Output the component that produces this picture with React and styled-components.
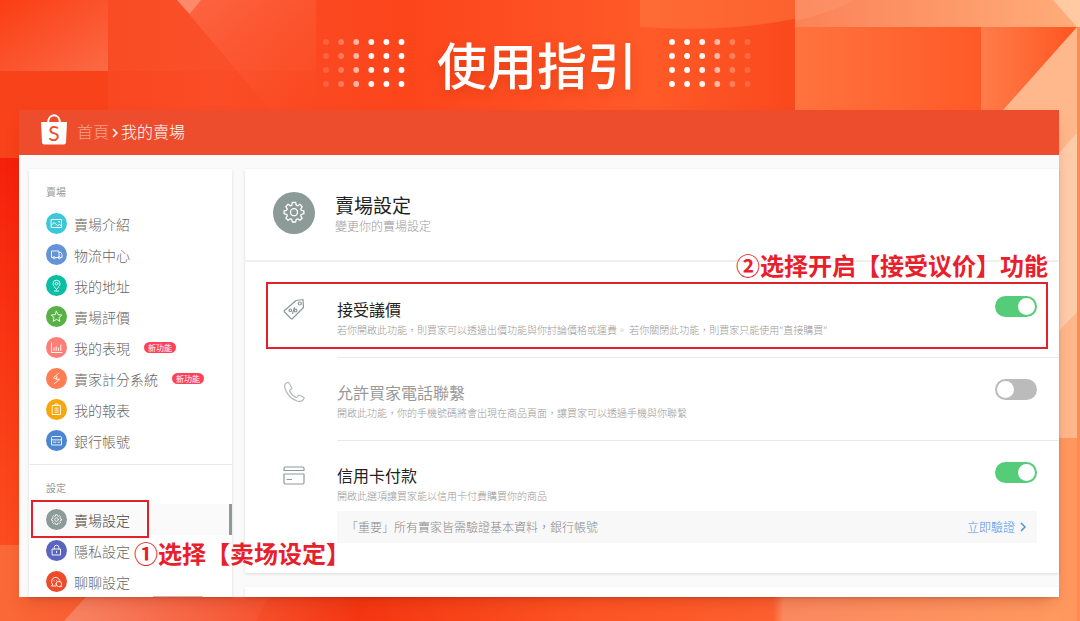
import React from 'react';
import styled, { createGlobalStyle, css } from 'styled-components';

const GlobalStyle = createGlobalStyle`
  * { box-sizing: border-box; }
  body {
    margin: 0;
    font-family: "Noto Sans CJK TC", "Noto Sans", sans-serif;
    font-weight: 300;
    color: #333;
  }
  h1, h2, h3, p, ul { margin: 0; padding: 0; }
  ul { list-style: none; }
  a { color: inherit; text-decoration: none; }
`;

const Page = styled.div`
  position: relative;
  display: flex;
  flex-direction: column;
  min-height: 100vh;
  padding: 0 21px 24px 19px;
  overflow: hidden;
  background: #fb4f22;
`;

const Backdrop = styled.svg`
  position: absolute;
  inset: 0;
  width: 100%;
  height: 100%;
`;

const Hero = styled.header`
  position: relative;
  display: flex;
  align-items: center;
  justify-content: center;
  gap: 32px;
  height: 110px;
  padding: 15px 4px 0 0;
`;

const HeroTitle = styled.h1`
  font-family: "Noto Sans CJK SC", sans-serif;
  font-size: 50px;
  line-height: 60px;
  font-weight: 500;
  color: #fff;
  text-shadow: 0 4px 10px rgba(190, 40, 0, 0.35);
`;

const Window = styled.div`
  position: relative;
  flex: 1;
  display: flex;
  flex-direction: column;
  background: #fafafb;
  box-shadow: 0 8px 16px -6px rgba(150, 30, 0, 0.35);
`;

const TopBar = styled.nav`
  display: flex;
  align-items: center;
  height: 45px;
  padding-left: 21px;
  background: #ee4d2d;
  color: #fff;
  font-size: 16px;
  line-height: 24px;
`;

const Crumb = styled.a`
  margin-left: ${(p) => (p.$home ? '9px' : '3px')};
  margin-right: ${(p) => (p.$home ? '3px' : '0')};
  padding-bottom: 4px;
  color: ${(p) => (p.$home ? '#f8a08c' : '#fff')};
`;

const Logo = styled.svg`
  margin-bottom: 6px;
`;

const Columns = styled.div`
  flex: 1;
  display: flex;
  gap: 13px;
  padding: 14px 0 0 10px;
`;

const card = css`
  background: #fff;
  box-shadow: 0 1px 3px rgba(0, 0, 0, 0.12);
`;

const Sidebar = styled.aside`
  ${card}
  position: relative;
  flex: 0 0 203px;
  &::after {
    content: "";
    position: absolute;
    right: 29px;
    bottom: 0;
    width: 50px;
    height: 1px;
    background: #d9b4b6;
  }
`;

const NavSection = styled.section`
  padding-top: 16px;
  & + & { border-top: 1px solid #e8e8ea; margin-top: 8px; }
`;

const NavHeading = styled.h2`
  padding-left: 17px;
  margin-bottom: 9px;
  font-size: 10px;
  line-height: 14px;
  font-weight: 400;
  color: #999;
`;

const NavItem = styled.li`
  position: relative;
`;

const NavLink = styled.a`
  display: flex;
  align-items: center;
  gap: 7px;
  height: 31px;
  padding-left: 17px;
  font-size: 14px;
  line-height: 20px;
  color: ${(p) => (p.$active ? '#444' : '#666')};
  ${(p) => p.$active && css`
    background: #fafafa;
    border-right: 3px solid #8c9a98;
  `}
`;

const NavIcon = styled.svg`
  flex: none;
  width: 21px;
  height: 21px;
  border-radius: 50%;
  background: ${(p) => p.$color};
  fill: none;
  stroke: #fff;
  stroke-width: 0.9;
  stroke-linejoin: round;
  stroke-linecap: round;
`;

const NewBadge = styled.span`
  margin-left: 7px;
  padding: 0 4px;
  border-radius: 6px;
  background: #ff4257;
  color: #fff;
  font-size: 8px;
  line-height: 11px;
  font-weight: 400;
`;

const Main = styled.main`
  flex: 1;
  min-width: 0;
  display: flex;
  flex-direction: column;
  gap: 14px;
`;

const Card = styled.section`
  ${card}
`;

const NextCard = styled.div`
  ${card}
  flex: 1;
  min-height: 10px;
`;

const CardHeader = styled.div`
  display: flex;
  gap: 20px;
  padding: 23px 28px 26px;
  border-bottom: 2px solid #f0f0f1;
`;

const HeaderIcon = styled.svg`
  flex: none;
  width: 42px;
  height: 42px;
  border-radius: 50%;
  background: #8c9a98;
`;

const CardTitle = styled.h2`
  font-size: 19px;
  line-height: 26px;
  font-weight: 400;
  color: #222;
`;

const CardSubtitle = styled.p`
  font-size: 12px;
  line-height: 16px;
  color: #999;
`;

const Settings = styled.ul`
  padding: 13px 0 10px;
`;

const Setting = styled.li`
  position: relative;
  display: flex;
  gap: 32px;
  padding-left: 38px;
  &:last-child > div { border-bottom: 0; }
`;

const SettingIcon = styled.svg`
  flex: none;
  width: 22px;
  height: 22px;
  margin-top: 23px;
  fill: none;
  stroke: ${(p) => (p.$off ? '#b5babb' : '#8c9a9c')};
  stroke-width: 1.2;
  stroke-linejoin: round;
  stroke-linecap: round;
`;

const SettingBody = styled.div`
  flex: 1;
  min-width: 0;
  padding: 21px 22px 20px 0;
  border-bottom: 1px solid #e9e9ea;
`;

const SettingLine = styled.div`
  display: flex;
  align-items: flex-start;
  justify-content: space-between;
`;

const SettingText = styled.div`
  padding-top: 3px;
`;

const SettingTitle = styled.label`
  display: block;
  font-size: 16px;
  line-height: 20px;
  font-weight: 400;
  color: ${(p) => (p.$off ? '#999' : '#222')};
`;

const SettingDesc = styled.p`
  margin-top: 4px;
  font-size: 10px;
  line-height: 14px;
  color: #999;
`;

const Switch = styled.input`
  appearance: none;
  flex: none;
  display: flex;
  width: 42px;
  height: 21px;
  margin: 0;
  padding: 2px;
  border-radius: 11px;
  background: #bbb;
  cursor: pointer;
  &::before {
    content: "";
    width: 17px;
    height: 17px;
    border-radius: 50%;
    background: #fff;
  }
  &:checked {
    justify-content: flex-end;
    background: #55cc77;
  }
`;

const Notice = styled.div`
  display: flex;
  align-items: center;
  justify-content: space-between;
  height: 32px;
  margin-top: 8px;
  padding: 0 11px 0 9px;
  background: #f8f8f9;
  font-size: 12px;
  line-height: 16px;
  color: #888;
`;

const VerifyLink = styled.a`
  display: flex;
  align-items: center;
  gap: 5px;
  color: #4a90e8;
`;

const Highlight = styled.div`
  position: absolute;
  border: 2px solid #e3202b;
  pointer-events: none;
  ${(p) => p.$wide
    ? 'top: 7px; bottom: 9px; left: 21px; right: 11px;'
    : 'top: -4px; bottom: -3px; left: 2px; width: 118px;'}
`;

const Callout = styled.strong`
  position: absolute;
  font-family: "Noto Sans CJK SC", sans-serif;
  font-size: 24px;
  line-height: 30px;
  font-weight: 700;
  color: #e8202b;
  white-space: nowrap;
  pointer-events: none;
  ${(p) => p.$wide
    ? 'right: 11px; top: -25px;'
    : 'left: 105px; top: 34px;'}
`;

const GEAR = 'M9.3 1.5h3.4l.5 2.6 1.5.7 2.2-1.6 2.3 2.4-1.5 2.2.6 1.5 2.6.5v2.9l-2.6.6-.6 1.5 1.5 2.2-2.3 2.3-2.2-1.5-1.5.6-.5 2.6H9.3l-.5-2.6-1.5-.6-2.2 1.5-2.3-2.3 1.5-2.2-.7-1.5-2.5-.6V9.8l2.5-.5.7-1.5-1.5-2.2 2.3-2.4 2.2 1.6 1.5-.7z';

const navGlyphs = {
  shop: <><rect x="5.5" y="6.5" width="10" height="8" /><path d="M5.5 12l2.5-2.5 3.5 3 2-1 2 1.5" /><circle cx="13" cy="8.8" r=".4" /></>,
  truck: <><path d="M7 13.5H5.5v-6.5h7.5v6.500H9.500M13 8.500h2l1 2v3h-1.500" /><circle cx="8.200" cy="13.700" r="1.100" /><circle cx="13.300" cy="13.700" r="1.100" /></>,
  pin: <><path d="M10.500 14.500C8.500 12 7 10.500 7 8.700a3.500 3.500 0 0 1 7 0c0 1.800-1.500 3.300-3.500 5.800z" /><circle cx="10.500" cy="8.700" r="1.300" /><path d="M8.500 16h4" /></>,
  star: <path d="M10.500 5.200l1.600 3.500 3.700.4-2.800 2.500.8 3.700-3.300-1.900-3.300 1.900.8-3.700-2.800-2.500 3.700-.4z" />,
  chart: <path d="M5.500 6v9.500h10.500M8 13.500v-2.500M10.200 13.500v-4M12.400 13.500v-2.500M14.800 13.500v-5.500" />,
  bolt: <path d="M12.500 5.500l-5 4.200 2.500 1.300M8.500 15.500l5-4.200-3.500-.3 1-2.500" />,
  report: <><rect x="6.500" y="6.500" width="8" height="9" /><path d="M9 6.500v-1.500h3v1.500M9 9.200h3.200M9 11.200h3.200M9 13.200h3.200" /></>,
  bank: <><path d="M5.500 9.500v-2a1 1 0 0 1 1-1h8a1 1 0 0 1 1 1v2zM5.500 9.500v5.500h10v-5.500" /><path d="M7.500 12.200h2.500M12 12.200h1.500" /></>,
  gear: <><g transform="translate(5 5) scale(.5)" strokeWidth="1.600"><path d={GEAR} /><circle cx="11" cy="11" r="3.500" /></g></>,
  lock: <><rect x="6.500" y="9" width="8" height="6" /><path d="M8.200 9v-1.500a2.300 2.300 0 0 1 4.600 0v1.500M10.500 11.300v1.500" /></>,
  chat: <><path d="M6.500 13.500a4.300 4.300 0 1 1 7.500-2.500M6.500 13.500l-1 1.500h4.500" /><path d="M10 13a2.800 2.500 0 1 1 5 1.300l.7 1.200h-3.200A2.600 2.600 0 0 1 10 13zM8 9.800h.1M10.500 9.800h.1" /></>,
};

const settingGlyphs = {
  tag: <><path d="M13 2.500l7-1 .5 8-11 11a1 1 0 0 1-1.500 0l-6.500-6.500a1 1 0 0 1 0-1.500z" /><circle cx="16.800" cy="5.500" r="1.500" /><path d="M11.500 9.500l-2 6" /><circle cx="7.300" cy="12.300" r="1.300" /><circle cx="12.600" cy="12.500" r="1.300" /></>,
  phone: <path d="M4.500 1.500C2 2.500 1 4.500 2 7.500c2 6 6.500 10.500 12 12.500 3 1 5.500.5 7-2.500.2-.5 0-1-.5-1.300l-3.700-2c-.5-.3-1-.2-1.300.2l-1.500 1.800c-.4.4-.8.400-1.300.200-2.500-1.300-4.700-3.500-6-6-.2-.5-.1-1 .3-1.300L8.500 8c.4-.4.5-.8.300-1.300L6 2c-.3-.5-.9-.8-1.500-.5z" />,
  card: <><path d="M1 6.500v-2a1.500 1.500 0 0 1 1.500-1.500h17a1.500 1.500 0 0 1 1.500 1.500v2zM1 10h20v8.500a1.500 1.500 0 0 1-1.500 1.500h-17a1.500 1.500 0 0 1-1.500-1.500zM4 15.500h4.500" /></>,
};

const sections = [
  {
    title: '賣場',
    items: [
      { icon: 'shop', color: '#3cc8d9', text: '賣場介紹' },
      { icon: 'truck', color: '#6593d8', text: '物流中心' },
      { icon: 'pin', color: '#08bfa3', text: '我的地址' },
      { icon: 'star', color: '#57b147', text: '賣場評價' },
      { icon: 'chart', color: '#ff7e76', text: '我的表現', isNew: true },
      { icon: 'bolt', color: '#ff7d54', text: '賣家計分系統', isNew: true },
      { icon: 'report', color: '#f5a70c', text: '我的報表' },
      { icon: 'bank', color: '#4b86cf', text: '銀行帳號' },
    ],
  },
  {
    title: '設定',
    items: [
      { icon: 'gear', color: '#8c9a98', text: '賣場設定', active: true },
      { icon: 'lock', color: '#5b65c0', text: '隱私設定' },
      { icon: 'chat', color: '#ee4b2b', text: '聊聊設定' },
    ],
  },
];

const settings = [
  {
    id: 'offer', icon: 'tag', on: true, title: '接受議價',
    desc: '若你開啟此功能，則買家可以透過出價功能與你討論價格或運費。 若你關閉此功能，則買家只能使用"直接購買"',
    callout: '②选择开启【接受议价】功能',
  },
  {
    id: 'call', icon: 'phone', on: false, title: '允許買家電話聯繫',
    desc: '開啟此功能，你的手機號碼將會出現在商品頁面，讓買家可以透過手機與你聯繫',
  },
  {
    id: 'credit', icon: 'card', on: true, title: '信用卡付款',
    desc: '開啟此選項讓買家能以信用卡付費購買你的商品',
    notice: '「重要」所有賣家皆需驗證基本資料，銀行帳號',
  },
];

const fade = [0.15, 0.28, 0.6, 0.92, 1, 1];

function Dots({ mirrored }) {
  const levels = mirrored ? [...fade].reverse() : fade;
  return (
    <svg width="82" height="48" aria-hidden="true">
      {levels.map((o, c) => [0, 1, 2, 3].map((r) => (
        <circle key={`${c}-${r}`} cx={3 + c * 15.1} cy={3 + r * 14} r="2.9" fill="#fff" opacity={o} />
      )))}
    </svg>
  );
}

function Chevron({ size }) {
  return (
    <svg width="6" height={size} viewBox="0 0 6 10" fill="none" stroke="currentColor" strokeWidth="1.5" aria-hidden="true">
      <path d="M1 1l4 4-4 4" />
    </svg>
  );
}

function Scenery() {
  return (
    <Backdrop viewBox="0 0 1080 621" preserveAspectRatio="none" aria-hidden="true">
      <defs>
        <linearGradient id="base">
          <stop offset="0" stopColor="#f8431b" />
          <stop offset=".2" stopColor="#fa4c26" />
          <stop offset=".38" stopColor="#fc451b" />
          <stop offset=".6" stopColor="#ff5a28" />
          <stop offset=".73" stopColor="#fa4a1d" />
          <stop offset="1" stopColor="#ff5a28" />
        </linearGradient>
        <linearGradient id="corner" x2="1" y2="1">
          <stop offset="0" stopColor="#fb3d14" />
          <stop offset="1" stopColor="#fb6a45" />
        </linearGradient>
        <linearGradient id="slope" x2="1" y2="1">
          <stop offset="0" stopColor="#ff7c5c" stopOpacity=".55" />
          <stop offset="1" stopColor="#fb5530" stopOpacity="0" />
        </linearGradient>
        <linearGradient id="leftLow" x2="0" y2="1">
          <stop offset="0" stopColor="#f6200a" />
          <stop offset="1" stopColor="#fc4d1e" />
        </linearGradient>
        <linearGradient id="topRight">
          <stop offset="0" stopColor="#fb8257" />
          <stop offset="1" stopColor="#ffad79" />
        </linearGradient>
        <linearGradient id="midRight">
          <stop offset="0" stopColor="#ff733e" />
          <stop offset="1" stopColor="#ff5a27" />
        </linearGradient>
        <linearGradient id="farRight">
          <stop offset="0" stopColor="#ff7d49" />
          <stop offset="1" stopColor="#ff541f" />
        </linearGradient>
        <linearGradient id="floor">
          <stop offset="0" stopColor="#fb6837" />
          <stop offset=".24" stopColor="#f6502b" />
          <stop offset=".34" stopColor="#f53612" />
          <stop offset=".55" stopColor="#fd5423" />
          <stop offset=".73" stopColor="#fd6030" />
          <stop offset=".74" stopColor="#fb8a60" />
          <stop offset="1" stopColor="#ff995f" />
        </linearGradient>
        <linearGradient id="floorLight">
          <stop offset="0" stopColor="#f88565" />
          <stop offset="1" stopColor="#f65330" />
        </linearGradient>
      </defs>
      <rect width="1080" height="621" fill="url(#base)" />
      <rect width="108" height="71" fill="url(#corner)" />
      <rect y="71" width="108" height="87" fill="#f8421a" />
      <rect x="108" width="208" height="71" fill="#ff6a40" opacity=".12" />
      <path d="M177 0H316V110H270L189 14z" fill="url(#slope)" />
      <path d="M177 0H201L189.500 14z" fill="#ff8a6b" />
      <path d="M640 27Q770 36 855 0H640z" fill="#ff8044" opacity=".45" />
      <rect x="795" width="285" height="27" fill="url(#topRight)" />
      <path d="M795 0H855Q830 13 795 21z" fill="#ff9a70" opacity=".4" />
      <rect x="795" y="27" width="186" height="83" fill="url(#midRight)" />
      <rect x="981" y="27" width="99" height="83" fill="url(#farRight)" />
      <path d="M1053 0H1080V27H1077z" fill="#ffc9a2" />
      <path d="M1077 27L1003 110H1059V438H1080V27z" fill="#ffb88b" />
      <path d="M1059 153L1077 133V312L1059 331z" fill="#ffcca9" />
      <rect x="1059" y="438" width="21" height="183" fill="#ff985f" />
      <rect x="1077" y="27" width="3" height="594" fill="#ff8b50" />
      <rect y="158" width="19" height="387" fill="url(#leftLow)" />
      <rect y="545" width="19" height="76" fill="#fb6837" />
      <rect y="597" width="1059" height="24" fill="url(#floor)" />
      <path d="M64 621L86 597H268L256 621z" fill="url(#floorLight)" />
    </Backdrop>
  );
}

export default function App() {
  return (
    <>
      <GlobalStyle />
      <Page>
        <Scenery />
        <Hero>
          <Dots />
          <HeroTitle lang="zh-CN">使用指引</HeroTitle>
          <Dots mirrored />
        </Hero>
        <Window>
          <TopBar>
            <Logo width="28" height="31" viewBox="0 0 28 31" aria-hidden="true">
              <path d="M8 9.500C8 4.500 10.500 1.200 14 1.200S20 4.500 20 9.500" fill="none" stroke="#fff" strokeWidth="2" />
              <path d="M1 8H27L26 28.500A2.200 2.200 0 0 1 23.800 30.500H4.200A2.200 2.200 0 0 1 2 28.500z" fill="#fff" />
              <text x="14" y="26.500" textAnchor="middle" fontFamily="Lato, sans-serif" fontSize="21" fontWeight="400" fill="#ee4d2d">S</text>
            </Logo>
            <Crumb href="#home" $home>首頁</Crumb>
            <Chevron size={10} />
            <Crumb href="#shop">我的賣場</Crumb>
          </TopBar>
          <Columns>
            <Sidebar>
              {sections.map((section) => (
                <NavSection key={section.title}>
                  <NavHeading>{section.title}</NavHeading>
                  <ul>
                    {section.items.map((item) => (
                      <NavItem key={item.text}>
                        <NavLink href={`#${item.icon}`} $active={item.active}>
                          <NavIcon viewBox="0 0 21 21" $color={item.color} aria-hidden="true">{navGlyphs[item.icon]}</NavIcon>
                          {item.text}
                          {item.isNew && <NewBadge>新功能</NewBadge>}
                        </NavLink>
                        {item.active && (
                          <>
                            <Highlight />
                            <Callout lang="zh-CN">①选择【卖场设定】</Callout>
                          </>
                        )}
                      </NavItem>
                    ))}
                  </ul>
                </NavSection>
              ))}
            </Sidebar>
            <Main>
              <Card>
                <CardHeader>
                  <HeaderIcon viewBox="0 0 42 42" aria-hidden="true">
                    <g transform="translate(10 9)" fill="none" stroke="#fff" strokeWidth="1.300" strokeLinejoin="round">
                      <path d={GEAR} />
                      <circle cx="11" cy="11.200" r="3.500" />
                    </g>
                  </HeaderIcon>
                  <div>
                    <CardTitle>賣場設定</CardTitle>
                    <CardSubtitle>變更你的賣場設定</CardSubtitle>
                  </div>
                </CardHeader>
                <Settings>
                  {settings.map((s) => (
                    <Setting key={s.id}>
                      <SettingIcon viewBox="0 0 22 22" $off={!s.on} aria-hidden="true">{settingGlyphs[s.icon]}</SettingIcon>
                      <SettingBody>
                        <SettingLine>
                          <SettingText>
                            <SettingTitle htmlFor={s.id} $off={!s.on}>{s.title}</SettingTitle>
                            <SettingDesc>{s.desc}</SettingDesc>
                          </SettingText>
                          <Switch type="checkbox" id={s.id} defaultChecked={s.on} />
                        </SettingLine>
                        {s.notice && (
                          <Notice>
                            <span>{s.notice}</span>
                            <VerifyLink href="#verify">立即驗證 <Chevron size={10} /></VerifyLink>
                          </Notice>
                        )}
                      </SettingBody>
                      {s.callout && (
                        <>
                          <Highlight $wide />
                          <Callout $wide lang="zh-CN">{s.callout}</Callout>
                        </>
                      )}
                    </Setting>
                  ))}
                </Settings>
              </Card>
              <NextCard />
            </Main>
          </Columns>
        </Window>
      </Page>
    </>
  );
}
